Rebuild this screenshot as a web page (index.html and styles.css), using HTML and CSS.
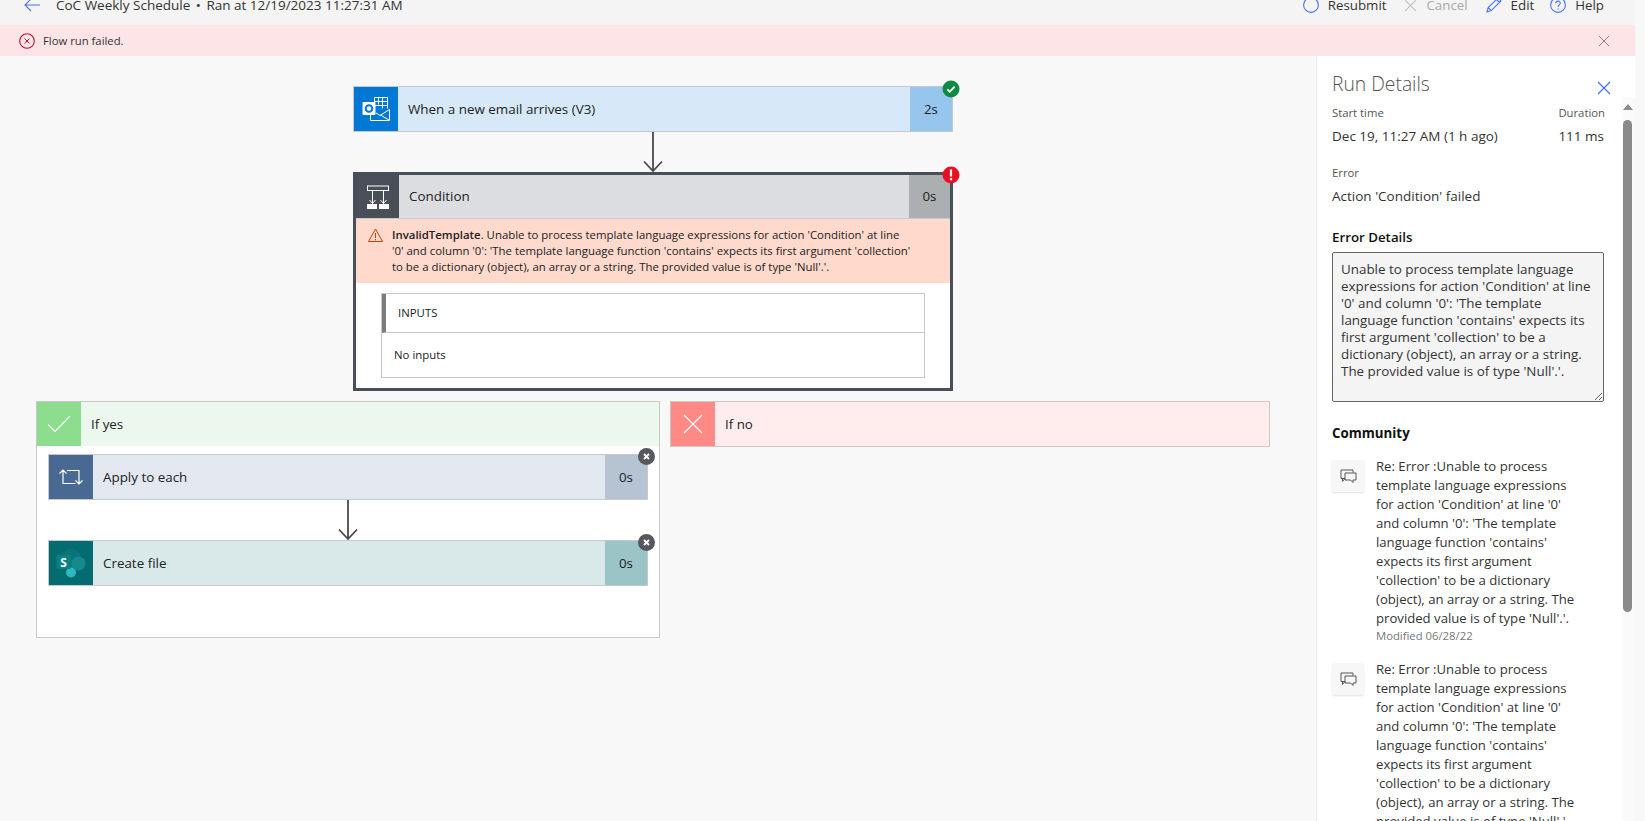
FILE: index.html
```html
<!DOCTYPE html>
<html lang="en">
<head>
  <meta charset="UTF-8" />
  <title>CoC Weekly Schedule - Run</title>
  <link rel="stylesheet" href="styles.css">
</head>
<body>
  <div class="page">
    <div class="topbar">
      <div class="top-title">
        <svg class="back-icon" width="16" height="14" viewBox="0 0 16 14"><path d="M7 1 1 7l6 6M1 7h15" fill="none" stroke="#4a72f0" stroke-width="1.1"/></svg>
        <span>CoC Weekly Schedule <span class="dot">•</span> Ran at 12/19/2023 11:27:31 AM</span>
      </div>
      <div class="top-actions">
        <div class="top-btn">
          <svg width="16" height="16" viewBox="0 0 16 16"><circle cx="8" cy="8" r="7.4" fill="none" stroke="#4a72f0" stroke-width="1.1"/></svg>
          <span>Resubmit</span>
        </div>
        <div class="top-btn disabled">
          <svg width="13" height="13" viewBox="0 0 13 13"><path d="M1 1l11 11M12 1 1 12" fill="none" stroke="#c4c4c4" stroke-width="1.1"/></svg>
          <span>Cancel</span>
        </div>
        <div class="top-btn">
          <svg width="16" height="16" viewBox="0 0 16 16"><path d="M1 15l1.2-4.4L12 1l3 3-9.8 9.6zM2.2 10.6l3 3M10.5 2.5l3 3" fill="none" stroke="#4a72f0" stroke-width="1.1"/></svg>
          <span>Edit</span>
        </div>
        <div class="top-btn">
          <svg width="16" height="16" viewBox="0 0 16 16"><circle cx="8" cy="8" r="7.4" fill="none" stroke="#4a72f0" stroke-width="1.1"/><path d="M5.8 6.2C5.8 3.4 10.3 3.4 10.3 6.1 10.3 7.9 8 7.9 8 10M8 11.4v1.2" fill="none" stroke="#4a72f0" stroke-width="1.1"/></svg>
          <span>Help</span>
        </div>
      </div>
    </div>

    <div class="msgbar">
      <svg width="16" height="16" viewBox="0 0 16 16"><circle cx="8" cy="8" r="7.3" fill="none" stroke="#b5122b" stroke-width="1.1"/><path d="M5.5 5.5l5 5M10.5 5.5l-5 5" fill="none" stroke="#b5122b" stroke-width="1"/></svg>
      <span class="msg-text">Flow run failed.</span>
      <svg class="msg-close" width="12" height="12" viewBox="0 0 12 12"><path d="M1 1l10 10M11 1 1 11" fill="none" stroke="#8f7f81" stroke-width="1"/></svg>
    </div>

    <div class="content">
      <div class="canvas">
        <div class="flow">
          <div class="card card-outlook">
            <div class="card-icon">
              <svg width="28" height="26" viewBox="0 0 28 26">
                <g fill="none" stroke="#fff" stroke-width="1">
                  <path d="M12.5 1.5h13v11M12.5 5.500h13M12.500 9.500h13M16.500 1.500v7M20.500 1.500v11M12.500 1.500v5"/>
                  <path d="M8.500 14.500v10h19v-11l-9.500 6-4-2.500M27 24l-8.500-5"/>
                </g>
                <rect x="0.500" y="6" width="13" height="13" rx="1" fill="#fff"/>
                <circle cx="7" cy="12.500" r="3.300" fill="none" stroke="#0078d4" stroke-width="2"/>
              </svg>
            </div>
            <div class="card-name">When a new email arrives (V3)</div>
            <div class="card-time">2s</div>
            <svg class="badge" width="18" height="18" viewBox="0 0 18 18"><circle cx="9" cy="9" r="8.500" fill="#0f8a45"/><path d="M5.300 9.300l2.500 2.400 4.800-5" fill="none" stroke="#fff" stroke-width="1.800"/></svg>
          </div>

          <svg class="arrow" width="24" height="40" viewBox="0 0 24 40"><path d="M12 0v39M3 29.500l9 9.500 9-9.500" fill="none" stroke="#4a4a4a" stroke-width="1.800"/></svg>

          <div class="cond">
            <div class="cond-head">
              <div class="card-icon">
                <svg width="24" height="24" viewBox="0 0 24 24">
                  <rect x="1.500" y="1" width="21" height="4.500" fill="none" stroke="#fff" stroke-width="1"/>
                  <path d="M6.500 5.500v13M3.500 15l3 3.500 3-3.500M17.500 5.500v13M14.500 15l3 3.500 3-3.500" fill="none" stroke="#fff" stroke-width="1"/>
                  <rect x="1" y="19" width="10" height="5" fill="#fff"/>
                  <rect x="13" y="19" width="10" height="5" fill="#fff"/>
                </svg>
              </div>
              <div class="card-name">Condition</div>
              <div class="card-time">0s</div>
              <svg class="badge" width="18" height="18" viewBox="0 0 18 18"><circle cx="9" cy="9" r="8.500" fill="#e81123"/><path d="M9 3.500v7M9 12v2.300" fill="none" stroke="#fff" stroke-width="2.200"/></svg>
            </div>
            <div class="cond-error">
              <svg width="15" height="14" viewBox="0 0 15 14"><path d="M7.500 1 14.500 13.500H.5zM7.500 5v5M7.500 11v1.400" fill="none" stroke="#d83b01" stroke-width="1"/></svg>
              <p><b>InvalidTemplate</b>. Unable to process template language expressions for action 'Condition' at line<br>'0' and column '0': 'The template language function 'contains' expects its first argument 'collection'<br>to be a dictionary (object), an array or a string. The provided value is of type 'Null'.'.</p>
            </div>
            <div class="cond-body">
              <div class="inputs">
                <div class="inputs-head">INPUTS</div>
                <div class="inputs-body">No inputs</div>
              </div>
            </div>
          </div>

          <div class="branches">
            <div class="branch branch-yes">
              <div class="branch-head">
                <div class="branch-icon">
                  <svg width="24" height="18" viewBox="0 0 24 18"><path d="M1 9.500l7 7L23 1" fill="none" stroke="#fff" stroke-width="1.100"/></svg>
                </div>
                <div class="branch-name">If yes</div>
              </div>
              <div class="branch-body">
                <div class="card card-apply">
                  <div class="card-icon">
                    <svg width="24" height="18" viewBox="0 0 24 18"><path d="M4 16V2M.5 5.500 4 2l3.500 3.500M4 15.500h12.500M8 2.500h12V16M16.500 12.500 20 16l3.500-3.500" fill="none" stroke="#fff" stroke-width="1.200"/></svg>
                  </div>
                  <div class="card-name">Apply to each</div>
                  <div class="card-time">0s</div>
                  <svg class="badge" width="17" height="17" viewBox="0 0 17 17"><circle cx="8.500" cy="8.500" r="8.500" fill="#55585c"/><path d="M6 6l5 5M11 6l-5 5" fill="none" stroke="#fff" stroke-width="1.800"/></svg>
                </div>
                <svg class="arrow" width="24" height="40" viewBox="0 0 24 40"><path d="M12 0v39M3 29.500l9 9.500 9-9.500" fill="none" stroke="#4a4a4a" stroke-width="1.800"/></svg>
                <div class="card card-create">
                  <div class="card-icon">
                    <svg width="30" height="30" viewBox="0 0 30 30">
                      <circle cx="15" cy="10.500" r="10" fill="#0a7478"/>
                      <circle cx="22.500" cy="15.500" r="7" fill="#15898e"/>
                      <circle cx="15" cy="24.500" r="5" fill="#2fb8c0"/>
                      <rect x="0.500" y="7" width="14" height="14" rx="1" fill="#0a8085"/>
                      <text x="7.500" y="18.500" class="sp-letter" text-anchor="middle">S</text>
                    </svg>
                  </div>
                  <div class="card-name">Create file</div>
                  <div class="card-time">0s</div>
                  <svg class="badge" width="17" height="17" viewBox="0 0 17 17"><circle cx="8.500" cy="8.500" r="8.500" fill="#55585c"/><path d="M6 6l5 5M11 6l-5 5" fill="none" stroke="#fff" stroke-width="1.800"/></svg>
                </div>
              </div>
            </div>
            <div class="branch branch-no">
              <div class="branch-head">
                <div class="branch-icon">
                  <svg width="20" height="20" viewBox="0 0 20 20"><path d="M1 1l18 18M19 1 1 19" fill="none" stroke="#fff" stroke-width="1.100"/></svg>
                </div>
                <div class="branch-name">If no</div>
              </div>
            </div>
          </div>
        </div>
      </div>

      <div class="panel">
        <div class="panel-head">
          <h2>Run Details</h2>
          <svg width="14" height="14" viewBox="0 0 14 14"><path d="M1 1l12 12M13 1 1 13" fill="none" stroke="#3b6ff0" stroke-width="1.100"/></svg>
        </div>
        <div class="stats">
          <div>
            <div class="label">Start time</div>
            <div class="value">Dec 19, 11:27 AM (1 h ago)</div>
          </div>
          <div>
            <div class="label">Duration</div>
            <div class="value">111 ms</div>
          </div>
        </div>
        <div class="error-block">
          <div class="label">Error</div>
          <div class="value">Action 'Condition' failed</div>
        </div>
        <h3 class="details-title">Error Details</h3>
        <textarea class="details" readonly>Unable to process template language
expressions for action 'Condition' at line
'0' and column '0': 'The template
language function 'contains' expects its
first argument 'collection' to be a
dictionary (object), an array or a string.
The provided value is of type 'Null'.'.</textarea>
        <h3 class="community-title">Community</h3>
        <div class="post">
          <div class="post-icon">
            <svg width="17" height="15" viewBox="0 0 17 15"><path d="M5 9.500H1V1h12v2.500M2.500 9.500v3l2.500-3" fill="none" stroke="#555" stroke-width="1"/><path d="M5 4h11v7h-3v2.500L10.500 11H5z" fill="#f7f7f7" stroke="#555" stroke-width="1"/></svg>
          </div>
          <div class="post-text">
            <div>Re: Error :Unable to process template language expressions for action 'Condition' at line '0' and column '0': 'The template language function 'contains' expects its first argument 'collection' to be a dictionary (object), an array or a string. The provided value is of type 'Null'.'.</div>
            <div class="post-date">Modified 06/28/22</div>
          </div>
        </div>
        <div class="post">
          <div class="post-icon">
            <svg width="17" height="15" viewBox="0 0 17 15"><path d="M5 9.500H1V1h12v2.500M2.500 9.500v3l2.500-3" fill="none" stroke="#555" stroke-width="1"/><path d="M5 4h11v7h-3v2.500L10.500 11H5z" fill="#f7f7f7" stroke="#555" stroke-width="1"/></svg>
          </div>
          <div class="post-text">
            <div>Re: Error :Unable to process template language expressions for action 'Condition' at line '0' and column '0': 'The template language function 'contains' expects its first argument 'collection' to be a dictionary (object), an array or a string. The provided value is of type 'Null'.'.</div>
            <div class="post-date">Modified 06/28/22</div>
          </div>
        </div>
        <div class="scroll-track">
          <div class="scroll-up"></div>
          <div class="scroll-thumb"></div>
        </div>
      </div>
    </div>
  </div>
</body>
</html>
```

FILE: styles.css
```css
html, body {
  margin: 0;
  height: 100%;
  overflow: hidden;
}
body {
  background: #f8f8f8;
  font-family: "Open Sans", "Noto Sans", Arial, sans-serif;
  font-size: 13.3px;
  color: #333;
}
.page {
  width: 1635px;
  height: 821px;
  display: flex;
  flex-direction: column;
}

/* Top command bar, scrolled partly off the page */
.topbar {
  height: 25px;
  box-sizing: border-box;
  padding: 0 31px 10px 24px;
  background: #f4f4f4;
  display: flex;
  justify-content: space-between;
  align-items: flex-end;
  overflow: hidden;
  flex: none;
}
.top-title {
  display: flex;
  align-items: center;
  gap: 16px;
  line-height: 20px;
  font-size: 13.5px;
}
.dot {
  margin: 0 2px;
}
.top-actions {
  display: flex;
  align-items: center;
  gap: 18px;
  line-height: 20px;
}
.top-btn {
  display: flex;
  align-items: center;
  gap: 9px;
}
.top-btn:last-child {
  margin-left: -2px;
}
.top-btn.disabled {
  color: #a8a8a8;
}
.msgbar {
  height: 31px;
  flex: none;
  background: #fde5e7;
  display: flex;
  align-items: center;
  padding: 0 25px 0 19px;
  font-size: 11.3px;
  gap: 8px;
}
.msg-text {
  flex: 1;
}

.content {
  flex: 1;
  display: flex;
  min-height: 0;
}
.canvas {
  flex: 1;
  min-width: 0;
  padding-top: 30px;
}
.flow {
  width: 1234px;
  margin-left: 36px;
  display: flex;
  flex-direction: column;
  align-items: center;
}
.arrow {
  display: block;
  flex: none;
}

/* Action cards */
.card {
  width: 600px;
  height: 46px;
  box-sizing: border-box;
  border: 1px solid #c8c8c8;
  display: flex;
  position: relative;
  color: #222;
}
.card-icon {
  width: 44px;
  flex: none;
  display: flex;
  align-items: center;
  justify-content: center;
}
.card-name {
  flex: 1;
  padding-left: 10px;
  line-height: 44px;
  white-space: nowrap;
  font-size: 13.4px;
}
.card-time {
  width: 42px;
  flex: none;
  text-align: center;
  line-height: 44px;
}
.badge {
  position: absolute;
  top: -7px;
  right: -8px;
}
.card-outlook { background: #d7e9f8; }
.card-outlook .card-icon { background: #0078d4; }
.card-outlook .card-time { background: #96c6ee; }
.card-apply { background: #e3e8f0; }
.card-apply .card-icon { background: #486991; }
.card-apply .card-time { background: #b5c3d3; }
.card-create { background: #d9e9e9; }
.card-create .card-icon { background: #036c70; }
.card-create .card-time { background: #9ac4c6; }
.sp-letter {
  font-size: 12px;
  font-weight: 700;
  fill: #fff;
}

/* Condition card */
.cond {
  width: 600px;
  box-sizing: border-box;
  border: 3px solid #484f58;
  background: #fff;
  color: #222;
}
.cond-head {
  height: 44px;
  display: flex;
  position: relative;
  background: #dcdde0;
  border-bottom: 1px solid #c8c8c8;
  box-sizing: border-box;
}
.cond-head .card-icon {
  width: 43px;
  background: #484f58;
}
.cond-head .card-name { line-height: 43px; }
.cond-head .card-time {
  width: 41px;
  background: #acafb1;
  line-height: 43px;
}
.cond-head .badge {
  top: -9px;
  right: -10px;
}
.cond-error {
  background: #fed9cc;
  padding: 8px 12px 8px 12px;
  display: flex;
  gap: 9px;
  font-size: 11.4px;
  line-height: 16px;
}
.cond-error svg {
  flex: none;
  margin-top: 1px;
}
.cond-error p {
  margin: 0;
  white-space: nowrap;
}
.cond-error b {
  font-weight: 600;
}
.cond-body {
  padding: 10px 25px;
}
.inputs {
  border: 1px solid #c8c8c8;
  height: 85px;
  box-sizing: border-box;
}
.inputs-head {
  height: 39px;
  box-sizing: border-box;
  border-left: 4px solid #797c80;
  border-bottom: 1px solid #c8c8c8;
  padding-left: 12px;
  line-height: 38px;
  font-size: 11.4px;
}
.inputs-body {
  padding-left: 12px;
  line-height: 44px;
  font-size: 11.4px;
}

/* If yes / If no branches */
.branches {
  margin-top: 10px;
  align-self: stretch;
  display: flex;
  gap: 10px;
  align-items: flex-start;
}
.branch {
  box-sizing: border-box;
  border: 1px solid #c8c8c8;
}
.branch-head {
  height: 44px;
  display: flex;
  color: #222;
}
.branch-icon {
  width: 44px;
  flex: none;
  display: flex;
  align-items: center;
  justify-content: center;
}
.branch-name {
  padding-left: 10px;
  line-height: 44px;
}
.branch-yes {
  width: 624px;
  height: 237px;
  background: #fff;
}
.branch-yes .branch-head { background: #ecf7ee; }
.branch-yes .branch-icon { background: #8cdd8d; }
.branch-no {
  width: 600px;
  background: #ffeded;
}
.branch-no .branch-icon { background: #ff8a85; }
.branch-body {
  padding-top: 8px;
  display: flex;
  flex-direction: column;
  align-items: center;
}

/* Run details panel */
.panel {
  width: 319px;
  flex: none;
  box-sizing: border-box;
  border-left: 1px solid #ececec;
  background: #fff;
  padding-left: 15px;
  position: relative;
  overflow: hidden;
}
.panel-head {
  display: flex;
  align-items: flex-end;
  width: 279px;
  justify-content: space-between;
  padding-top: 14px;
}
.panel-head h2 {
  margin: 0;
  font-size: 19.3px;
  font-weight: 300;
  line-height: 28px;
  color: #555;
}
.panel-head svg {
  margin-bottom: 3px;
}
.stats {
  display: flex;
  justify-content: space-between;
  margin-top: 7px;
  width: 273px;
}
.label {
  font-size: 11.3px;
  line-height: 16px;
  color: #555;
}
.value {
  margin-top: 5px;
  line-height: 20px;
  white-space: nowrap;
  font-size: 13.5px;
}
.error-block {
  margin-top: 19px;
}
.details-title,
.community-title {
  margin: 0;
  font-size: 13.3px;
  font-weight: 600;
  line-height: 20px;
  color: #111;
}
.details-title {
  margin-top: 21px;
}
.details {
  display: block;
  margin-top: 5px;
  width: 272px;
  height: 150px;
  box-sizing: border-box;
  padding: 8px;
  border: 1px solid #666;
  border-radius: 2px;
  background: #f4f4f4;
  color: #333;
  font-family: inherit;
  font-size: 13.4px;
  line-height: 17px;
  overflow: hidden;
  white-space: pre;
}
.community-title {
  margin-top: 21px;
  font-weight: 700;
}
.post {
  display: flex;
  gap: 12px;
  margin-top: 14px;
  margin-bottom: 17px;
}
.post + .post {
  margin-top: 0;
}
.post-icon {
  width: 32px;
  height: 32px;
  flex: none;
  margin-top: 3px;
  background: #f7f7f7;
  box-shadow: 0 1px 2px rgba(0, 0, 0, 0.12);
  border-radius: 2px;
  display: flex;
  align-items: center;
  justify-content: center;
}
.post-text {
  width: 204px;
  line-height: 19px;
  font-size: 13.15px;
}
.post-date {
  font-size: 11.3px;
  line-height: 15px;
  color: #777;
}

/* Panel scrollbar */
.scroll-track {
  position: absolute;
  top: 41px;
  right: 0;
  bottom: 0;
  width: 13px;
  background: #fafafa;
}
.scroll-up {
  position: absolute;
  top: 7px;
  left: 1px;
  border-left: 5px solid transparent;
  border-right: 5px solid transparent;
  border-bottom: 6px solid #8a8a8a;
}
.scroll-thumb {
  position: absolute;
  top: 23px;
  left: 1px;
  width: 9px;
  height: 492px;
  background: #8a8a8a;
  border-radius: 5px;
}
```
